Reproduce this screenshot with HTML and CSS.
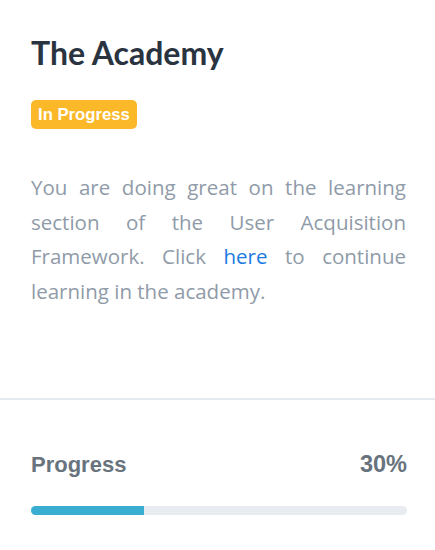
FILE: index.html
```html
<!DOCTYPE html>
<html>
<head>
<meta charset="utf-8">
<link rel="stylesheet" href="styles.css">
</head>
<body>
<div class="card">
  <div class="card-body">
    <h1 class="title">The Academy</h1>
    <span class="badge">In Progress</span>
    <p class="text">You are doing great on the learning section of the User Acquisition Framework. Click <a class="link" href="#">here</a> to continue learning in the academy.</p>
  </div>
  <div class="card-footer">
    <div class="progress-head">
      <span class="progress-label">Progress</span>
      <span class="progress-value">30%</span>
    </div>
    <div class="progress-track">
      <div class="progress-fill" style="width:30%"></div>
    </div>
  </div>
</div>
</body>
</html>
```
FILE: styles.css
```css
html, body {
  margin: 0;
  padding: 0;
  background: #ffffff;
}
body {
  font-family: "Open Sans", Lato, sans-serif;
  width: 435px;
  height: 550px;
  overflow: hidden;
}
.card {
  display: flex;
  flex-direction: column;
}
.card-body {
  padding: 33px 29px 90px 31px;
  border-bottom: 2px solid #e5eaf0;
  display: flex;
  flex-direction: column;
  align-items: flex-start;
}
.title {
  margin: 0;
  font-family: Lato, "Open Sans", sans-serif;
  font-size: 32px;
  line-height: 40px;
  font-weight: 700;
  color: #2a3340;
}
.badge {
  margin-top: 27px;
  background: #fbb829;
  color: #ffffff;
  font-family: "Liberation Sans", Arial, sans-serif;
  font-weight: 700;
  font-size: 16.7px;
  line-height: 29px;
  padding: 0 7px;
  border-radius: 5px;
}
.text {
  margin: 41px 0 0 0;
  font-size: 20.5px;
  line-height: 34.5px;
  color: #8f9ba8;
  text-align: justify;
}
.link {
  color: #1a7be0;
  text-decoration: none;
}
.card-footer {
  padding: 50px 28px 0 31px;
}
.progress-head {
  display: flex;
  justify-content: space-between;
  align-items: baseline;
  font-family: "Liberation Sans", Arial, sans-serif;
  font-size: 22px;
  font-weight: 700;
  color: #68737d;
  line-height: 28px;
}
.progress-value {
  font-size: 23.5px;
}
.progress-track {
  margin-top: 27px;
  height: 9px;
  background: #e8ecf0;
  border-radius: 5px;
  overflow: hidden;
}
.progress-fill {
  height: 100%;
  background: #3aaed0;
}
```
